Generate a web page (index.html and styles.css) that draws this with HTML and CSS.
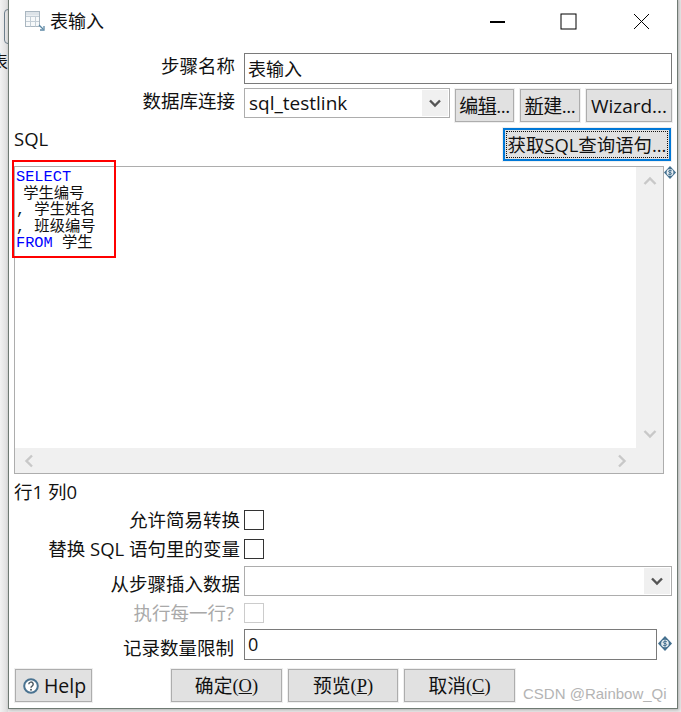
FILE: index.html
```html
<!DOCTYPE html>
<html lang="zh-CN">
<head>
<meta charset="utf-8">
<title>表输入</title>
<link rel="stylesheet" href="styles.css">
</head>
<body>
<div class="peek"><span class="peek-box"></span><span class="peek-text">表</span></div>
<main class="window">
  <header class="titlebar">
    <svg class="title-icon" width="20" height="20" viewBox="0 0 20 20" fill="none">
      <rect x="0.500" y="0.500" width="14" height="15" fill="#f7f9fa" stroke="#a9b6c0"/>
      <rect x="1" y="1" width="13" height="3.500" fill="#dde3e8"/>
      <path d="M1 5.500h13M1 10.500h13M5.500 5v10.500M10.500 5v10.500" stroke="#c4ced6"/>
      <path d="M14 14l4 4" stroke="#5c88a5" stroke-width="1.300"/>
      <path d="M19 15v4h-4" stroke="#5c88a5" stroke-width="1.300"/>
    </svg>
    <span class="title-text">表输入</span>
    <div class="controls">
      <svg width="15" height="16" viewBox="0 0 15 16"><path d="M0 8h15" stroke="#000" stroke-width="2"/></svg>
      <svg width="17" height="17" viewBox="0 0 17 17"><rect x="1" y="1" width="15" height="15" fill="none" stroke="#000"/></svg>
      <svg width="17" height="17" viewBox="0 0 17 17"><path d="M1 1l15 15M16 1L1 16" stroke="#000" fill="none"/></svg>
    </div>
  </header>

  <div class="row row-name">
    <label class="label">步骤名称</label>
    <div class="input input-name">表输入</div>
  </div>

  <div class="row row-conn">
    <label class="label">数据库连接</label>
    <div class="combo combo-conn">
      <span class="combo-value">sql_testlink</span>
      <span class="combo-arrow"><svg width="12" height="9" viewBox="0 0 12 9"><path d="M1 1.500l5 5 5-5" fill="none" stroke="#555" stroke-width="2.400"/></svg></span>
    </div>
    <button class="btn btn-edit">编<u>辑</u>...</button>
    <button class="btn btn-new"><u>新</u>建...</button>
    <button class="btn btn-wiz">Wizard...</button>
  </div>

  <div class="row row-sql">
    <span class="sql-label">SQL</span>
    <button class="btn btn-get"><span class="focus-ring">获取<u>S</u>QL查询语句...</span></button>
  </div>

  <section class="editor">
    <div class="editor-main">
      <pre class="code"><span class="kw">SELECT</span>
<span class="tight"> </span>学生编号
, 学生姓名
, 班级编号
<span class="kw">FROM</span> 学生</pre>
      <div class="vbar">
        <svg width="14" height="10" viewBox="0 0 14 10"><path d="M1.500 8l5.500-5.500L12.500 8" fill="none" stroke="#c8c8c8" stroke-width="2.400"/></svg>
        <svg width="14" height="10" viewBox="0 0 14 10"><path d="M1.500 2l5.500 5.500L12.500 2" fill="none" stroke="#c8c8c8" stroke-width="2.400"/></svg>
      </div>
    </div>
    <div class="hbar">
      <svg width="10" height="14" viewBox="0 0 10 14"><path d="M8 1.500L2.500 7 8 12.500" fill="none" stroke="#c8c8c8" stroke-width="2.400"/></svg>
      <svg width="10" height="14" viewBox="0 0 10 14"><path d="M2 1.500L7.500 7 2 12.500" fill="none" stroke="#c8c8c8" stroke-width="2.400"/></svg>
    </div>
  </section>

  <div class="status">行1 列0</div>

  <div class="row row-check1">
    <label class="label label-b">允许简易转换</label>
    <span class="check"></span>
  </div>
  <div class="row row-check2">
    <label class="label label-b">替换 SQL 语句里的变量</label>
    <span class="check"></span>
  </div>
  <div class="row row-from">
    <label class="label label-b label-low">从步骤插入数据</label>
    <div class="combo combo-from">
      <span class="combo-value"></span>
      <span class="combo-arrow"><svg width="12" height="9" viewBox="0 0 12 9"><path d="M1 1.500l5 5 5-5" fill="none" stroke="#555" stroke-width="2.400"/></svg></span>
    </div>
  </div>
  <div class="row row-each">
    <label class="label label-c disabled">执行每一行?</label>
    <span class="check check-off"></span>
  </div>
  <div class="row row-limit">
    <label class="label label-c label-low">记录数量限制</label>
    <div class="input input-limit">0</div>
  </div>

  <footer class="actions">
    <button class="btn btn-help">
      <svg width="16" height="16" viewBox="0 0 16 16"><circle cx="8" cy="8" r="6.800" fill="#fff" stroke="#4a7391" stroke-width="2"/><path d="M5.800 6.300a2.200 2.200 0 1 1 3.300 1.900c-.8.500-1.100.8-1.100 1.600" fill="none" stroke="#4d5a63" stroke-width="1.500"/><circle cx="8" cy="11.800" r="1" fill="#4d5a63"/></svg>
      <span>Help</span>
    </button>
    <div class="action-group">
      <button class="btn btn-act">确定<span class="mnemonic">(<u>O</u>)</span></button>
      <button class="btn btn-act">预览<span class="mnemonic">(<u>P</u>)</span></button>
      <button class="btn btn-act">取消<span class="mnemonic">(<u>C</u>)</span></button>
    </div>
  </footer>

  <div class="var var-a"><svg width="12" height="13" viewBox="0 0 12 13"><path d="M6 0l6 6.500-6 6.500-6-6.500z" fill="#44708f"/><circle cx="6" cy="6.500" r="3.400" fill="#e8eef2"/><path d="M7.800 5C7.200 4 4.500 4.100 4.500 5.400 4.500 7 7.600 6 7.600 7.600 7.600 9 4.800 9 4.200 8M6 3.500v6" fill="none" stroke="#44708f" stroke-width="1"/></svg></div>
  <div class="var var-b"><svg width="14" height="15" viewBox="0 0 14 15"><path d="M7 0l7 7.500-7 7.500-7-7.500z" fill="#44708f"/><circle cx="7" cy="7.500" r="3.800" fill="#e8eef2"/><path d="M9 6C8.300 4.900 5.300 5 5.300 6.400 5.300 8 8.700 7 8.700 8.600 8.700 10 5.600 10 4.900 9M7 4.300v6.400" fill="none" stroke="#44708f" stroke-width="1"/></svg></div>
  <div class="redbox"></div>
  <div class="mark">CSDN @Rainbow_Qi</div>
</main>
</body>
</html>
```

FILE: styles.css
```css
* { box-sizing: border-box; }
html, body { margin: 0; padding: 0; }
body {
  width: 681px;
  height: 712px;
  background: #e9e9e9;
  overflow: hidden;
  position: relative;
  font-family: "Open Sans", "Noto Sans CJK SC", sans-serif;
  color: #111;
}
.peek { position: absolute; left: 0; top: 0; width: 8px; height: 712px; background: linear-gradient(90deg, #f2f2f2, #dcdcdc); overflow: hidden; }
.peek-box { position: absolute; left: 4px; top: 9px; width: 12px; height: 35px; border: 1px solid #6d7f8c; border-radius: 4px; }
.peek-text { position: absolute; left: -9px; top: 50px; font-size: 17px; line-height: 24px; }

.window {
  position: absolute;
  left: 8px;
  top: -2px;
  width: 670px;
  height: 711px;
  background: #fff;
  border: 1px solid #6f7a73;
  border-top: 0;
  box-shadow: 1px 1px 3px rgba(0,0,0,.25);
  padding-top: 2px;
}
.titlebar { height: 40px; padding-top: 3px; display: flex; align-items: center; padding-left: 16px; position: relative; }
.title-icon { margin-top: -1px; }
.title-text { font-size: 18px; margin-left: 5px; line-height: 20px; margin-top: -1px; }
.controls { margin-left: auto; display: flex; align-items: center; margin-right: 27px; gap: 55px; }
.controls svg:nth-child(3) { margin-left: 1px; }

.row { display: flex; align-items: center; }
.label { width: 226px; flex: none; text-align: right; font-size: 18.500px; line-height: 24px; white-space: nowrap; }
.label-b { width: 231px; }
.label-c { width: 225px; }
.label-low { padding-top: 6px; }
.disabled { color: #a9a9a9; }

.row-name { height: 31px; margin-top: 13px; }
.row-name .label { margin-bottom: 5px; }
.row-conn { height: 34px; margin-top: 4px; align-items: flex-start; }
.row-conn .label { margin-top: 1px; }
.row-name .input { margin-left: 9px; padding-top: 1px; }
.row-conn .combo { margin-left: 9px; }

.input { border: 1px solid #7a7a7a; background: #fff; font-size: 18px; line-height: 29px; padding-left: 3px; }
.input-name { width: 428px; height: 31px; }
.input-limit { width: 413px; height: 31px; margin-left: 10px; }

.combo { border: 1px solid #adadad; background: #fff; display: flex; align-items: stretch; justify-content: space-between; }
.combo-value { font-size: 19px; line-height: 28px; padding-left: 4px; }
.combo-arrow { width: 26px; margin: 1px; background: #f0f0f0; display: flex; align-items: center; justify-content: center; }
.combo-conn { width: 206px; height: 30px; }

.btn {
  background: #e1e1e1;
  border: 1px solid #adadad;
  outline: 1px solid #efefef;
  outline-offset: 0;
  font-family: "Open Sans", "Noto Sans CJK SC", sans-serif;
  font-size: 19px;
  color: #111;
  padding: 0;
  line-height: 22px;
  display: flex;
  align-items: center;
  justify-content: center;
  white-space: nowrap;
}
.btn-edit { width: 59px; height: 33px; margin-left: 5px; margin-top: 1px; letter-spacing: -.5px; }
.btn-new { width: 60px; height: 33px; margin-left: 6px; margin-top: 1px; letter-spacing: -.5px; }
.btn-wiz { width: 86px; height: 33px; margin-left: 6px; margin-top: 1px; }

.row-sql { height: 33px; margin-top: 6px; justify-content: space-between; padding-left: 5px; }
.sql-label { font-size: 18.500px; line-height: 24px; margin-top: -11px; }
.btn-get { width: 168px; height: 33px; margin-right: 6px; border: 2px solid #0078d7; padding: 1px; font-size: 18.400px; }
.focus-ring { display: flex; align-items: center; justify-content: center; width: 100%; height: 100%; border: 1px dotted #111; }

.editor { width: 650px; height: 308px; margin-top: 5px; margin-left: 5px; border: 1px solid #adadad; display: flex; flex-direction: column; }
.editor-main { flex: 1; display: flex; min-height: 0; }
.code { flex: 1; margin: 0; padding: 2px 0 0 1px; font-family: "Liberation Mono", "Noto Sans CJK SC", monospace; font-size: 15.300px; line-height: 16.500px; color: #111; }
.kw { color: #0000ff; }
.tight { letter-spacing: -2px; }
.vbar { width: 27px; background: #f0f0f0; display: flex; flex-direction: column; justify-content: space-between; align-items: center; padding: 9px 0; }
.hbar { height: 25px; background: #f0f0f0; display: flex; justify-content: space-between; align-items: center; padding: 0 36px 0 9px; }

.status { font-size: 18.500px; line-height: 22px; margin-top: 7px; padding-left: 5px; }

.check { display: block; width: 20px; height: 20px; margin-left: 4px; border: 1px solid #333; background: #fff; }
.check-off { border-color: #ccc; margin-left: 10px; }
.row-check1 { height: 20px; margin-top: 7px; }
.row-check2 { height: 20px; margin-top: 9px; }
.row-from { height: 30px; margin-top: 7px; }
.combo-from { width: 428px; height: 30px; margin-left: 4px; }
.row-each { height: 21px; margin-top: 6px; }
.row-limit { height: 31px; margin-top: 6px; }

.actions { display: flex; margin-top: 9px; padding-left: 6px; height: 33px; }
.btn-help { width: 77px; height: 33px; gap: 5px; font-size: 19.500px; padding-left: 2px; }
.action-group { display: flex; gap: 6px; margin-left: 79px; }
.btn-act { width: 111px; height: 33px; font-size: 18.800px; }
.btn-act:nth-child(2) { width: 110px; }
.mnemonic { font-family: "Liberation Serif", serif; font-size: 18.500px; }

.var { position: absolute; line-height: 0; }
.var-a { left: 655px; top: 168px; }
.var-b { left: 649px; top: 638px; }
.redbox { position: absolute; left: 3px; top: 162px; width: 104px; height: 98px; border: 2px solid #ff0000; }
.mark { position: absolute; left: 514px; top: 687px; font-family: "Liberation Sans", sans-serif; font-size: 15px; line-height: 18px; color: #b4b4b4; white-space: nowrap; }
```
